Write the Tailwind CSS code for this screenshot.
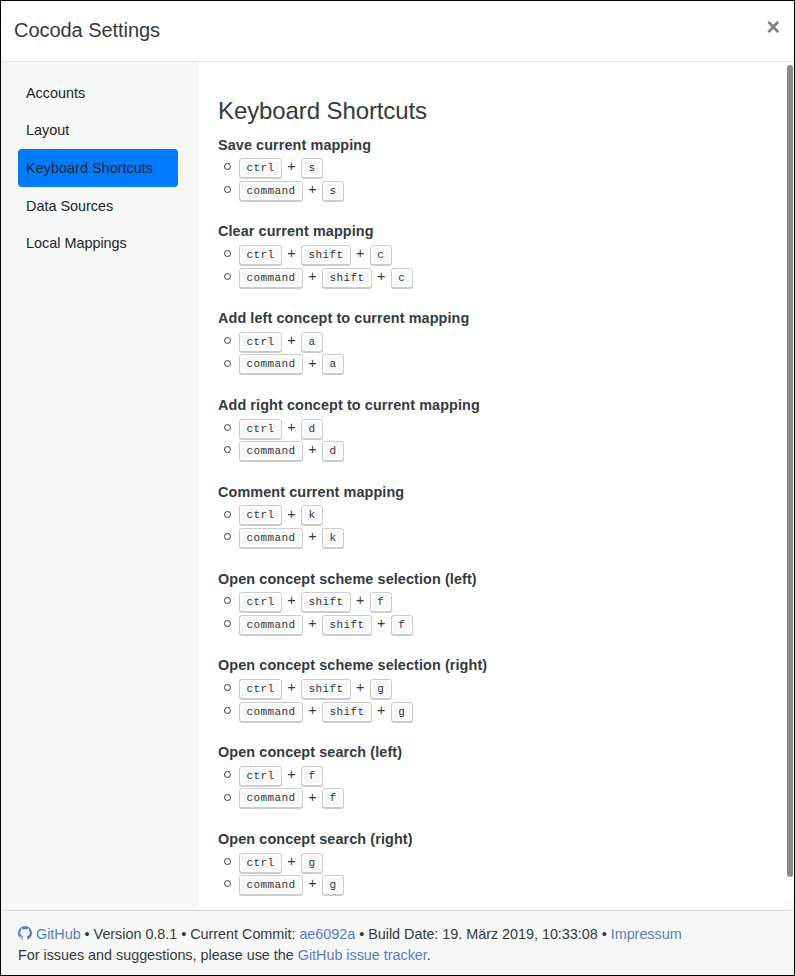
<!DOCTYPE html>
<html lang="en">
<head>
<meta charset="utf-8">
<title>Cocoda Settings</title>
<script src="https://cdn.jsdelivr.net/npm/@tailwindcss/browser@4"></script>
</head>
<body class="bg-white">
<div class="flex h-[976px] w-[795px] flex-col overflow-hidden border border-black font-['Liberation_Sans',Arial,sans-serif] text-[14.4px] text-[#343a40]">
  <header class="flex h-[61px] shrink-0 items-start justify-between border-b border-[#dee2e6] pl-[13px] pr-[14px]">
    <h1 class="pt-[14px] text-[20px] leading-[30px] tracking-[-0.05px]">Cocoda Settings</h1>
    <button class="pt-[15px] text-[23px] font-bold leading-[22px] text-[#7f7f7f]" aria-label="Close">×</button>
  </header>
  <div class="flex min-h-0 flex-1">
    <nav class="flex w-[197px] shrink-0 flex-col bg-[#f7f7f7] px-[17px] pt-[12px] leading-[22px] text-[#212529]">
      <a class="block h-[37px] w-[160px] rounded-[4px] p-2">Accounts</a>
      <a class="block h-[38px] w-[160px] rounded-[4px] p-2">Layout</a>
      <a class="block h-[38px] w-[160px] rounded-[4px] bg-[#007bff] p-2 tracking-[0.04px]">Keyboard Shortcuts</a>
      <a class="block h-[37px] w-[160px] rounded-[4px] p-2">Data Sources</a>
      <a class="block h-[37.5px] w-[160px] rounded-[4px] p-2">Local Mappings</a>
    </nav>
    <main class="flex-1 pl-5 pt-[34px]">
      <h2 class="mb-[7px] text-[24px] leading-[30px] tracking-[-0.1px]">Keyboard Shortcuts</h2>
      <div id="shortcuts"></div>
    </main>
    <div class="flex w-[10px] shrink-0 flex-col items-end justify-between pt-[3px]">
      <div class="mr-[1px] h-[812px] w-[6px] rounded-full bg-[#8b8b8b]"></div>
      <div class="h-3 w-[10px] bg-[#f8f9fa]"></div>
    </div>
  </div>
  <footer class="h-[65px] shrink-0 border-t border-[#d6d6d6] bg-[#f7f7f7] pl-[17px] pt-[13px] leading-[21px] tracking-[-0.025px]">
    <div class="whitespace-nowrap"><svg class="mr-[4px] inline-block h-[14px] w-[14px] align-[-1px]" viewBox="0 0 16 16"><circle cx="8" cy="8" r="8" fill="#577fbf"/><path fill="#f7f7f7" d="M3.5 3c.9-.1 1.8.4 2.5.9a8 8 0 0 1 4 0c.7-.5 1.6-1 2.5-.9.4.8.4 1.6.1 2.3.6.7.9 1.5.9 2.4 0 2.5-1.5 3.5-3.5 3.9.4.5.6 1.2.6 1.9V16H5.4v-2.1c-1.6.3-2.3-.3-2.8-1.4-.2-.5-.5-.7-.9-1 .9-.4 1.5.2 2 .9.5.7 1 .7 1.8.4.1-.5.3-.9.6-1.2-2-.4-3.6-1.4-3.6-3.9 0-.9.3-1.7.9-2.4-.3-.7-.3-1.5.1-2.3Z"/></svg><a class="text-[#577fbf]">GitHub</a> • Version 0.8.1 • Current Commit: <a class="text-[#577fbf]">ae6092a</a> • Build Date: 19. März 2019, 10:33:08 • <a class="text-[#577fbf]">Impressum</a></div>
    <div>For issues and suggestions, please use the <a class="text-[#577fbf]">GitHub issue tracker</a>.</div>
  </footer>
</div>
<script>
const groups = [
  ["Save current mapping", ["s"]],
  ["Clear current mapping", ["shift", "c"]],
  ["Add left concept to current mapping", ["a"]],
  ["Add right concept to current mapping", ["d"]],
  ["Comment current mapping", ["k"]],
  ["Open concept scheme selection (left)", ["shift", "f"]],
  ["Open concept scheme selection (right)", ["shift", "g"]],
  ["Open concept search (left)", ["f"]],
  ["Open concept search (right)", ["g"]]
];
const key = k => `<kbd class="relative top-[0.8px] inline-block h-[20px] rounded-[3px] border border-[#ccc] bg-[#f7f7f7] px-[6.6px] font-['Liberation_Mono',monospace] text-[11px] leading-[18px] tracking-[0.4px] shadow-[0_1px_0_rgb(0_0_0/0.2),inset_0_0_0_2px_white]">${k}</kbd>`;
const row = keys => `<li class="flex h-[22.7px] items-start"><span class="ml-[6px] mr-[8px] mt-[6px] size-[7px] rounded-full border border-[#343a40]"></span>${keys.map(key).join('<span class="w-[18.6px] text-center leading-[19px]">+</span>')}</li>`;
document.getElementById("shortcuts").innerHTML = groups.map(([t, k]) =>
  `<section class="h-[86.8px]"><h3 class="h-[24.4px] pt-[1.6px] font-bold leading-[21.6px] tracking-[0.1px]">${t}</h3><ul>${row(["ctrl", ...k])}${row(["command", ...k])}</ul></section>`).join("");
</script>
</body>
</html>
